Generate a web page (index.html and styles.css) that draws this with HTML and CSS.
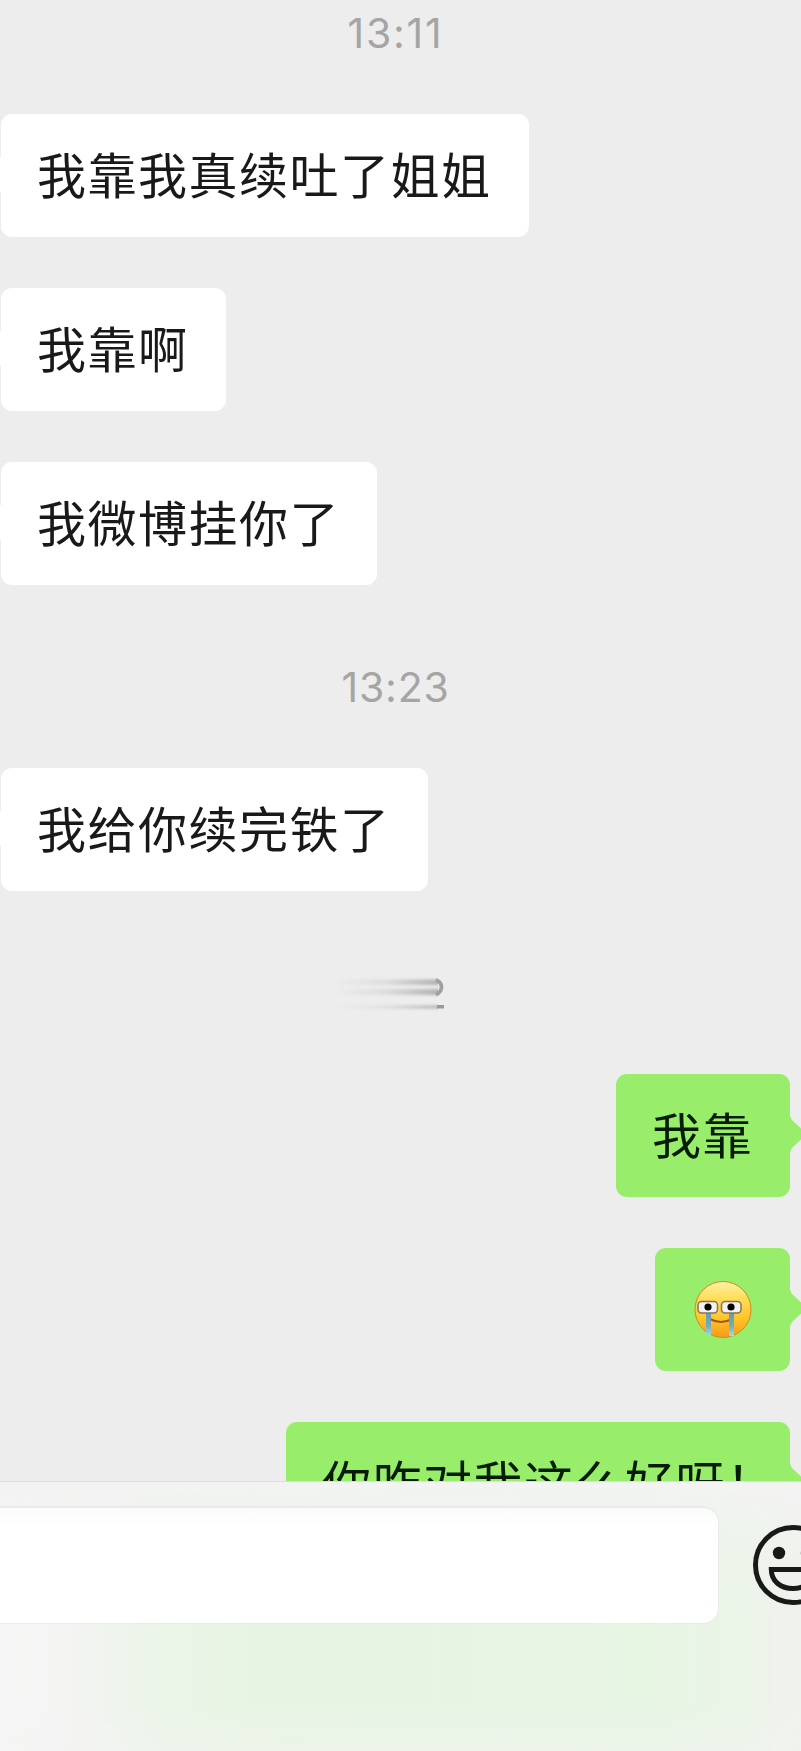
FILE: index.html
```html
<!DOCTYPE html>
<html lang="zh-CN">
<head>
<meta charset="utf-8">
<title>聊天</title>
<link rel="stylesheet" href="styles.css">
</head>
<body>
<div class="screen">
  <main class="chat">
    <time class="time first">13:11</time>
    <div class="msg in">我靠我真续吐了姐姐</div>
    <div class="msg in">我靠啊</div>
    <div class="msg in">我微博挂你了</div>
    <time class="time later">13:23</time>
    <div class="msg in">我给你续完铁了</div>
    <div class="smear">
      <svg width="112" height="36" viewBox="0 0 112 36">
        <defs>
          <linearGradient id="fade" x1="0" x2="1" y1="0" y2="0">
            <stop offset="0" stop-color="#999" stop-opacity="0"/>
            <stop offset=".5" stop-color="#999" stop-opacity=".2"/>
            <stop offset="1" stop-color="#8c8c8c" stop-opacity=".62"/>
          </linearGradient>
          <filter id="soft" x="-5%" y="-50%" width="110%" height="200%"><feGaussianBlur stdDeviation=".7 1.6"/></filter>
          <filter id="slight"><feGaussianBlur stdDeviation=".6"/></filter>
        </defs>
        <g filter="url(#soft)" fill="url(#fade)">
          <rect x="2" y="3.500" width="102" height="5.500"/>
          <rect x="2" y="13" width="102" height="6"/>
          <rect x="2" y="29.500" width="102" height="3"/>
        </g>
        <g filter="url(#slight)">
          <path d="M102 4Q107.500 6 107.500 11T102 18.500" fill="none" stroke="#a0a0a0" stroke-width="3.800"/>
          <rect x="103" y="29" width="7" height="3.500" fill="#999"/>
        </g>
      </svg>
    </div>
    <div class="msg out">我靠</div>
    <div class="msg out emoji">
      <svg width="58" height="60" viewBox="0 0 58 60">
        <defs>
          <linearGradient id="face" x1="0" x2="0" y1="0" y2="1">
            <stop offset="0" stop-color="#fff1a8"/>
            <stop offset=".28" stop-color="#ffdf5c"/>
            <stop offset=".65" stop-color="#ffc629"/>
            <stop offset="1" stop-color="#f79a17"/>
          </linearGradient>
          <linearGradient id="tear" x1="0" x2="0" y1="0" y2="1">
            <stop offset="0" stop-color="#5f9cb0"/>
            <stop offset=".6" stop-color="#74aebf"/>
            <stop offset="1" stop-color="#a6dcf0"/>
          </linearGradient>
        </defs>
        <circle cx="29" cy="29.5" r="28" fill="url(#face)" stroke="#d18a1c" stroke-width="1"/>
        <path d="M16 39Q27 45 38 39" fill="none" stroke="#9a5712" stroke-width="2"/>
        <path d="M12 32h5v23l-5-1zM35 32h5v24h-5z" fill="url(#tear)"/>
        <rect x="4" y="21.5" width="19.500" height="11.500" rx="3.500" fill="#f4f2ee" stroke="#85745b" stroke-width="1.500"/>
        <rect x="27.500" y="21.500" width="19.500" height="11.500" rx="3.500" fill="#f4f2ee" stroke="#85745b" stroke-width="1.500"/>
        <circle cx="14" cy="27" r="3.600" fill="#050505"/>
        <circle cx="37" cy="27" r="3.600" fill="#050505"/>
      </svg>
    </div>
    <div class="msg out">你咋对我这么好呀！</div>
  </main>
  <footer class="bar">
    <div class="field"></div>
    <svg class="smile" width="80" height="80" viewBox="0 0 80 80">
      <circle cx="40" cy="40" r="37.500" fill="none" stroke="#181a18" stroke-width="5"/>
      <circle cx="26" cy="28" r="6.200" fill="#181a18"/>
      <circle cx="54" cy="28" r="6.200" fill="#181a18"/>
      <path d="M18.300 44.500H61.700C61.700 56.500 52 63.500 40 63.500S18.300 56.500 18.300 44.500Z" fill="none" stroke="#181a18" stroke-width="5"/>
    </svg>
  </footer>
</div>
</body>
</html>
```
FILE: styles.css
```css
body {
  margin: 0;
}

.screen {
  display: flex;
  flex-direction: column;
  width: 801px;
  height: 1751px;
  overflow: hidden;
  background: #ededed;
  font-family: "Liberation Sans", "Noto Sans CJK SC", sans-serif;
}

.chat {
  box-sizing: border-box;
  display: flex;
  flex-direction: column;
  align-items: flex-start;
  gap: 51px;
  height: 1481px;
  padding: 4px 11px 0 1px;
  overflow: hidden;
}

.time {
  align-self: center;
  height: 59px;
  line-height: 59px;
  color: #a5a5a5;
  font-family: Inter, sans-serif;
  font-size: 41px;
  letter-spacing: .8px;
}

.first {
  letter-spacing: 1.8px;
}

.later {
  margin-top: 22px;
}

.msg {
  position: relative;
  box-sizing: border-box;
  flex: none;
  height: 123px;
  padding: 0 37px 0 36px;
  border-radius: 11px;
  color: #191919;
  font-family: "Noto Sans CJK SC", sans-serif;
  font-size: 49px;
  line-height: 118px;
  letter-spacing: 1.5px;
  white-space: nowrap;
}

.in {
  background: #fff;
}

.in::before {
  content: "";
  position: absolute;
  top: 43px;
  left: -1px;
  width: 2px;
  height: 35px;
  background: #fff;
}

.out {
  align-self: flex-end;
  background: #98ee6b;
  color: #061c02;
}

.out::after {
  content: "";
  position: absolute;
  top: 42px;
  left: 100%;
  width: 17px;
  height: 36px;
  background: #98ee6b;
  clip-path: polygon(0 0, 2px 4px, 17px 18px, 2px 32px, 0 36px);
}

.out:last-child {
  width: 504px;
}

.emoji {
  display: flex;
  align-items: center;
  width: 135px;
  padding-left: 39px;
}

.smear {
  display: flex;
  align-self: center;
  height: 36px;
  margin: 34px 12px 11px 0;
}

.bar {
  box-sizing: border-box;
  display: flex;
  align-items: flex-start;
  gap: 34px;
  height: 270px;
  padding-top: 24px;
  border-top: 1px solid #dcded9;
  background:
    linear-gradient(#f3f3f3 0, rgba(243, 243, 243, .3) 60px, rgba(243, 243, 243, 0) 140px, rgba(243, 243, 243, 0) 220px, rgba(243, 243, 243, .4) 270px),
    linear-gradient(90deg, #f6f6f6 0, #f3f4f2 80px, #ebf4e8 160px, #e8f4e3 260px, #e7f5e3 650px, #ebf4e8 745px, #f0f2ed 801px);
}

.field {
  box-sizing: border-box;
  flex: none;
  width: 719px;
  height: 118px;
  border: solid #e9ebe7;
  border-width: 2px 1px 1px 0;
  border-radius: 0 16px 16px 0;
  background: linear-gradient(#fbfbfc, #fff 20px);
}

.smile {
  flex: none;
  margin-top: 19px;
}
```
